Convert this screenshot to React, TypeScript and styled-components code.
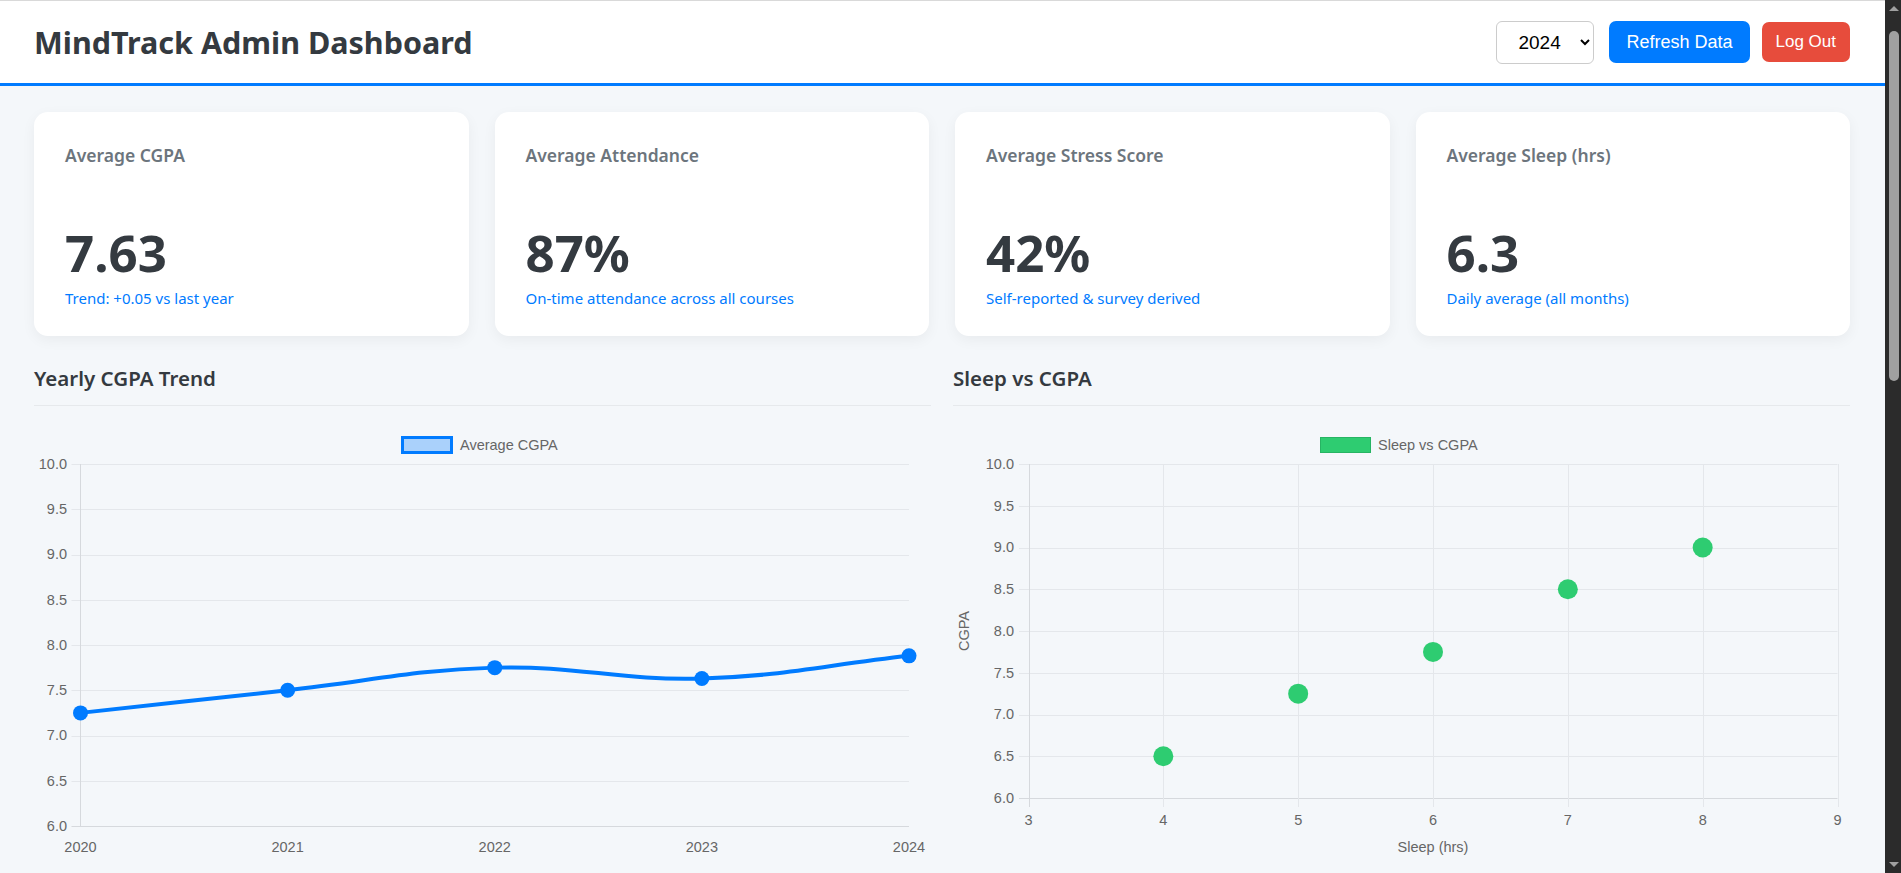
import React from 'react';
import styled, { createGlobalStyle } from 'styled-components';

const GlobalStyle = createGlobalStyle`
    html, body {
        margin: 0;
        padding: 0;
    }

    body {
        background: #f4f7fa;
        font-family: "Noto Sans", "Open Sans", sans-serif;
        color: #343a40;
    }
`;

const Page = styled.div`
    min-height: 2093px;
    padding-right: 16px;
`;

// the browser's dark scrollbar, drawn over the right edge
const ScrollTrack = styled.div`
    position: fixed;
    top: 0;
    right: 0;
    width: 16px;
    height: 100vh;
    background: #2b2b2b;
`;

const ScrollThumb = styled.div`
    position: absolute;
    top: 31px;
    left: 4px;
    width: 10px;
    height: 350px;
    border-radius: 5px;
    background: #a0a0a0;
`;

const ScrollArrow = styled.div<{ $down?: boolean }>`
    position: absolute;
    left: 4px;
    ${(p) => (p.$down ? 'bottom: 6px;' : 'top: 6px;')}
    width: 0;
    height: 0;
    border-left: 5px solid transparent;
    border-right: 5px solid transparent;
    ${(p) => (p.$down ? 'border-top: 5px solid #a0a0a0;' : 'border-bottom: 5px solid #a0a0a0;')}
`;

const Header = styled.header`
    display: flex;
    align-items: center;
    justify-content: space-between;
    box-sizing: border-box;
    height: 86px;
    padding: 0 35px 0 34px;
    background: #fff;
    border-top: 1px solid #d9d9d9;
    border-bottom: 3px solid #007bff;
`;

const Title = styled.h1`
    margin: 0;
    font-size: 30.5px;
    font-weight: 700;
    color: #343a40;
`;

const Controls = styled.div`
    display: flex;
    align-items: center;
    gap: 12px;
`;

const YearSelect = styled.select`
    box-sizing: border-box;
    width: 98px;
    height: 43px;
    margin-right: 3px;
    padding: 0 6px 0 17px;
    font-family: "Liberation Sans", Arial, sans-serif;
    font-size: 19px;
    color: #000;
    background: #fff;
    border: 1px solid #ccc;
    border-radius: 6px;
`;

const Button = styled.button<{ $variant: 'primary' | 'danger' }>`
    box-sizing: border-box;
    height: ${(p) => (p.$variant === 'primary' ? '42px' : '40px')};
    padding: 0 ${(p) => (p.$variant === 'primary' ? '17px' : '14px')};
    border: none;
    border-radius: 7px;
    font-family: "Liberation Sans", Arial, sans-serif;
    font-size: ${(p) => (p.$variant === 'primary' ? '18px' : '17px')};
    color: #fff;
    background: ${(p) => (p.$variant === 'primary' ? '#007bff' : '#e74c3c')};
    cursor: pointer;
`;

const Main = styled.main`
    padding: 26px 35px 0 34px;
`;

const CardGrid = styled.div`
    display: grid;
    grid-template-columns: repeat(4, 1fr);
    gap: 26px;
`;

const Card = styled.div`
    box-sizing: border-box;
    height: 224px;
    padding: 33px 31px 28px;
    display: flex;
    flex-direction: column;
    justify-content: space-between;
    background: #fff;
    border-radius: 14px;
    box-shadow: 0 4px 14px rgba(0, 0, 0, 0.05);
`;

const CardLabel = styled.div`
    font-size: 17.5px;
    font-weight: 600;
    line-height: 1.25;
    color: #6c757d;
`;

const CardValue = styled.div`
    font-size: 51px;
    font-weight: 700;
    line-height: 1.36;
    color: #343a40;
`;

const CardNote = styled.div`
    font-size: 15px;
    line-height: 1.36;
    color: #007bff;
`;

const ChartGrid = styled.div`
    display: grid;
    grid-template-columns: 1fr 1fr;
    gap: 22px;
    margin-top: 29px;
`;

const Section = styled.section``;

const SectionTitle = styled.h2`
    margin: 0;
    padding-bottom: 13px;
    font-size: 20.5px;
    font-weight: 600;
    line-height: 1.3;
    color: #343a40;
    border-bottom: 1px solid #e6e9ec;
`;

const ChartSvg = styled.svg`
    display: block;
    margin-top: 14px;
`;

const AxisText = styled.text`
    font-family: "Liberation Sans", Arial, sans-serif;
    font-size: 14.5px;
    fill: #666;
`;

const GRID = '#e4e7eb';
const AXIS = '#d6d9dd';
const W = 897;
const H = 460;
const yTicks = [10, 9.5, 9, 8.5, 8, 7.5, 7, 6.5, 6];

type Pt = { x: number; y: number };

// same control points chart.js uses for tension curves
const smoothPath = (pts: Pt[], t: number) => {
    const cps = pts.map((cur, i) => {
        const prev = pts[i - 1] || cur;
        const next = pts[i + 1] || cur;
        const d01 = Math.hypot(cur.x - prev.x, cur.y - prev.y);
        const d12 = Math.hypot(next.x - cur.x, next.y - cur.y);
        const s01 = d01 / (d01 + d12) || 0;
        const s12 = d12 / (d01 + d12) || 0;
        return {
            prev: { x: cur.x - t * s01 * (next.x - prev.x), y: cur.y - t * s01 * (next.y - prev.y) },
            next: { x: cur.x + t * s12 * (next.x - prev.x), y: cur.y + t * s12 * (next.y - prev.y) },
        };
    });
    let d = `M${pts[0].x},${pts[0].y}`;
    for (let i = 1; i < pts.length; i++) {
        const a = cps[i - 1].next;
        const b = cps[i].prev;
        d += ` C${a.x},${a.y} ${b.x},${b.y} ${pts[i].x},${pts[i].y}`;
    }
    return d;
};

const trend = [
    { year: '2020', cgpa: 7.25 },
    { year: '2021', cgpa: 7.5 },
    { year: '2022', cgpa: 7.75 },
    { year: '2023', cgpa: 7.63 },
    { year: '2024', cgpa: 7.88 },
];

const TrendChart = () => {
    const left = 46.5;
    const right = 875;
    const top = 44;
    const bottom = 406;
    const yOf = (v: number) => bottom - ((v - 6) / 4) * (bottom - top);
    const xOf = (i: number) => left + (i * (right - left)) / (trend.length - 1);
    const pts = trend.map((d, i) => ({ x: xOf(i), y: yOf(d.cgpa) }));

    return (
        <ChartSvg width={W} height={H} viewBox={`0 0 ${W} ${H}`}>
            <rect x={368.5} y={17.5} width={49} height={15} fill="rgba(0,123,255,0.3)" stroke="#007bff" strokeWidth={3} />
            <AxisText x={426} y={26} dominantBaseline="middle">Average CGPA</AxisText>
            {yTicks.map((v) => (
                <g key={v}>
                    <line x1={37.5} x2={right} y1={Math.round(yOf(v)) + 0.5} y2={Math.round(yOf(v)) + 0.5} stroke={v === 6 ? AXIS : GRID} />
                    <AxisText x={33} y={yOf(v) + 1} textAnchor="end" dominantBaseline="middle">{v.toFixed(1)}</AxisText>
                </g>
            ))}
            <line x1={left} x2={left} y1={top} y2={bottom} stroke={AXIS} />
            {trend.map((d, i) => (
                <AxisText key={d.year} x={xOf(i)} y={428} textAnchor="middle" dominantBaseline="middle">{d.year}</AxisText>
            ))}
            <path d={smoothPath(pts, 0.4)} fill="none" stroke="#007bff" strokeWidth={4} />
            {pts.map((p, i) => (
                <circle key={i} cx={p.x} cy={p.y} r={7.5} fill="#007bff" />
            ))}
        </ChartSvg>
    );
};

const sleep = [
    { hrs: 4, cgpa: 6.5 },
    { hrs: 5, cgpa: 7.25 },
    { hrs: 6, cgpa: 7.75 },
    { hrs: 7, cgpa: 8.5 },
    { hrs: 8, cgpa: 9 },
];

const SleepChart = () => {
    const left = 75.5;
    const right = 884.5;
    const top = 44;
    const bottom = 378;
    const yOf = (v: number) => bottom - ((v - 6) / 4) * (bottom - top);
    const xOf = (v: number) => left + ((v - 3) / 6) * (right - left);
    const xTicks = [3, 4, 5, 6, 7, 8, 9];

    return (
        <ChartSvg width={W} height={H} viewBox={`0 0 ${W} ${H}`}>
            <rect x={367.5} y={17.5} width={50} height={15} fill="#2ecc71" stroke="#27b463" strokeWidth={1} />
            <AxisText x={425} y={26} dominantBaseline="middle">Sleep vs CGPA</AxisText>
            {yTicks.map((v) => (
                <g key={v}>
                    <line x1={66} x2={right} y1={Math.round(yOf(v)) + 0.5} y2={Math.round(yOf(v)) + 0.5} stroke={v === 6 ? AXIS : GRID} />
                    <AxisText x={61} y={yOf(v) + 1} textAnchor="end" dominantBaseline="middle">{v.toFixed(1)}</AxisText>
                </g>
            ))}
            {xTicks.map((v) => (
                <g key={v}>
                    <line x1={Math.round(xOf(v)) + 0.5} x2={Math.round(xOf(v)) + 0.5} y1={top} y2={bottom + 9} stroke={v === 3 ? AXIS : GRID} />
                    <AxisText x={xOf(v)} y={401} textAnchor="middle" dominantBaseline="middle">{v}</AxisText>
                </g>
            ))}
            <AxisText x={(left + right) / 2} y={428} textAnchor="middle" dominantBaseline="middle">Sleep (hrs)</AxisText>
            <AxisText x={12} y={211} textAnchor="middle" dominantBaseline="middle" transform="rotate(-90 12 211)">CGPA</AxisText>
            {sleep.map((d) => (
                <circle key={d.hrs} cx={xOf(d.hrs)} cy={yOf(d.cgpa)} r={10} fill="#2ecc71" />
            ))}
        </ChartSvg>
    );
};

const stats = [
    { label: 'Average CGPA', value: '7.63', note: 'Trend: +0.05 vs last year' },
    { label: 'Average Attendance', value: '87%', note: 'On-time attendance across all courses' },
    { label: 'Average Stress Score', value: '42%', note: 'Self-reported & survey derived' },
    { label: 'Average Sleep (hrs)', value: '6.3', note: 'Daily average (all months)' },
];

export default function App() {
    return (
        <Page>
            <GlobalStyle />
            <Header>
                <Title>MindTrack Admin Dashboard</Title>
                <Controls>
                    <YearSelect defaultValue="2024">
                        <option>2024</option>
                        <option>2023</option>
                        <option>2022</option>
                        <option>2021</option>
                        <option>2020</option>
                    </YearSelect>
                    <Button $variant="primary">Refresh Data</Button>
                    <Button $variant="danger">Log Out</Button>
                </Controls>
            </Header>
            <Main>
                <CardGrid>
                    {stats.map((s) => (
                        <Card key={s.label}>
                            <CardLabel>{s.label}</CardLabel>
                            <div>
                                <CardValue>{s.value}</CardValue>
                                <CardNote>{s.note}</CardNote>
                            </div>
                        </Card>
                    ))}
                </CardGrid>
                <ChartGrid>
                    <Section>
                        <SectionTitle>Yearly CGPA Trend</SectionTitle>
                        <TrendChart />
                    </Section>
                    <Section>
                        <SectionTitle>Sleep vs CGPA</SectionTitle>
                        <SleepChart />
                    </Section>
                </ChartGrid>
            </Main>
            <ScrollTrack>
                <ScrollArrow />
                <ScrollThumb />
                <ScrollArrow $down />
            </ScrollTrack>
        </Page>
    );
}
